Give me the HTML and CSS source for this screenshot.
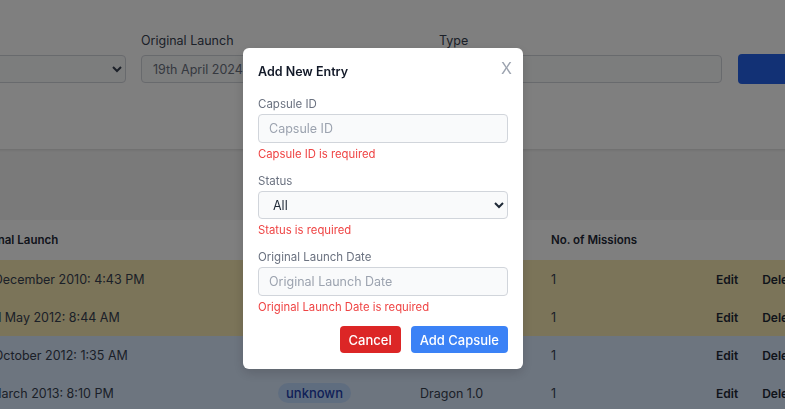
FILE: index.html
```html
<!DOCTYPE html>
<html lang="en">
<head>
<meta charset="utf-8">
<title>Capsules</title>
<link rel="stylesheet" href="styles.css">
</head>
<body>
<div class="page">
  <section class="filters">
    <div class="field">
      <label class="flabel">Status</label>
      <select class="fselect"><option>All</option></select>
    </div>
    <div class="field">
      <label class="flabel">Original Launch</label>
      <input class="finput" type="text" placeholder="19th April 2024">
    </div>
    <div class="field">
      <label class="flabel">Type</label>
      <input class="finput" type="text">
    </div>
    <div class="field">
      <label class="flabel">&nbsp;</label>
      <button class="search">Search</button>
    </div>
  </section>

  <section class="table">
    <div class="row head">
      <div>Capsule Serial</div>
      <div>Original Launch</div>
      <div>Status</div>
      <div>Type</div>
      <div>No. of Missions</div>
      <div></div>
    </div>
    <div class="row yellow">
      <div>C101</div>
      <div>8th December 2010: 4:43 PM</div>
      <div><span class="badge">retired</span></div>
      <div>Dragon 1.0</div>
      <div>1</div>
      <div class="actions"><span>Edit</span><span>Delete</span></div>
    </div>
    <div class="row yellow">
      <div>C102</div>
      <div>22nd May 2012: 8:44 AM</div>
      <div><span class="badge">retired</span></div>
      <div>Dragon 1.0</div>
      <div>1</div>
      <div class="actions"><span>Edit</span><span>Delete</span></div>
    </div>
    <div class="row blue">
      <div>C103</div>
      <div>8th October 2012: 1:35 AM</div>
      <div><span class="badge">unknown</span></div>
      <div>Dragon 1.0</div>
      <div>1</div>
      <div class="actions"><span>Edit</span><span>Delete</span></div>
    </div>
    <div class="row blue">
      <div>C104</div>
      <div>1st March 2013: 8:10 PM</div>
      <div><span class="badge">unknown</span></div>
      <div>Dragon 1.0</div>
      <div>1</div>
      <div class="actions"><span>Edit</span><span>Delete</span></div>
    </div>
  </section>
</div>

<div class="overlay"></div>

<div class="modal">
  <h2 class="title">Add New Entry</h2>
  <button class="close">X</button>
  <div class="group">
    <label class="mlabel">Capsule ID</label>
    <input class="minput" type="text" placeholder="Capsule ID">
    <p class="error">Capsule ID is required</p>
  </div>
  <div class="group">
    <label class="mlabel">Status</label>
    <select class="mselect"><option>All</option></select>
    <p class="error">Status is required</p>
  </div>
  <div class="group">
    <label class="mlabel">Original Launch Date</label>
    <input class="minput" type="text" placeholder="Original Launch Date">
    <p class="error">Original Launch Date is required</p>
  </div>
  <div class="buttons">
    <button class="btn cancel">Cancel</button>
    <button class="btn add">Add Capsule</button>
  </div>
</div>
</body>
</html>
```

FILE: styles.css
```css
* { box-sizing: border-box; }

html, body {
  margin: 0;
  padding: 0;
  overflow: hidden;
}

body {
  background: #f5f5f5;
  font-family: Inter, "Liberation Sans", sans-serif;
  color: #1f2937;
  width: 785px;
  height: 409px;
}

.page {
  margin-left: -177px;
  width: 1200px;
}

/* filter panel */
.filters {
  background: #ffffff;
  height: 149px;
  box-shadow: 0 1px 3px rgba(0, 0, 0, 0.12);
  padding: 31px 20px 0;
  display: grid;
  grid-template-columns: 283px 283px 283px 160px;
  column-gap: 15px;
}

.field {
  display: flex;
  flex-direction: column;
}

.flabel {
  font-size: 12.5px;
  line-height: 20px;
  color: #374151;
  margin-bottom: 4px;
}

.finput, .fselect {
  height: 28px;
  border: 1px solid #d1d5db;
  border-radius: 4px;
  background: #f9fafb;
  font-family: inherit;
  font-size: 12.5px;
  padding: 0 15px 0 11px;
  color: #374151;
}

.finput::placeholder { color: #6b7280; }

.search {
  margin-left: 1px;
  margin-top: -1px;
  height: 30px;
  border: 0;
  border-radius: 4px;
  background: #2563eb;
  color: #ffffff;
  font-family: inherit;
  font-size: 13px;
}

/* table */
.table {
  margin-top: 71px;
  padding-left: 20px;
}

.row {
  display: grid;
  grid-template-columns: 128px 307px 142px 131px 165px 1fr;
  align-items: center;
  height: 38px;
  font-size: 12.5px;
  color: #374151;
}

.row.head {
  height: 40px;
  background: #ffffff;
  font-size: 11.5px;
  font-weight: 600;
  color: #1f2937;
}

.row.yellow { background: #f6e8b2; }
.row.blue { background: #dbeafe; }

.badge {
  display: inline-block;
  background: #bfdbfe;
  color: #1e40af;
  font-size: 13px;
  font-weight: 500;
  border-radius: 999px;
  padding: 2px 8px;
  line-height: 16px;
}

.actions {
  display: flex;
  gap: 24px;
  font-size: 12px;
  font-weight: 600;
  color: #1f2937;
}

/* overlay + modal */
.overlay {
  position: fixed;
  inset: 0;
  background: rgba(0, 0, 0, 0.5);
}

.modal {
  position: fixed;
  left: 243px;
  top: 48px;
  width: 280px;
  background: #ffffff;
  border-radius: 6px;
  padding: 16px 15px 16px;
  box-shadow: 0 4px 12px rgba(0, 0, 0, 0.15);
}

.title {
  margin: 0 0 16px;
  font-size: 12.5px;
  line-height: 16px;
  font-weight: 600;
  color: #111827;
}

.close {
  position: absolute;
  top: 10px;
  right: 9px;
  border: 0;
  background: none;
  padding: 0 2px;
  font-family: inherit;
  font-size: 16px;
  line-height: 20px;
  color: #9ca3af;
}

.group {
  display: flex;
  flex-direction: column;
  margin-bottom: 11px;
}

.mlabel {
  font-size: 11.5px;
  line-height: 16px;
  color: #6b7280;
  margin-bottom: 2px;
}

.minput, .mselect {
  height: 29px;
  border: 1px solid #d1d5db;
  border-radius: 4px;
  background: #f9fafb;
  font-family: inherit;
  font-size: 12.5px;
  color: #1f2937;
  padding: 0 10px;
}

.mselect { height: 28px; }

.minput::placeholder { color: #9ca3af; }

.error {
  margin: 3px 0 0;
  font-size: 11.3px;
  line-height: 16px;
  color: #ef4444;
}

.buttons {
  display: flex;
  justify-content: flex-end;
  gap: 10px;
  margin-top: 0;
}

.btn {
  height: 27px;
  border: 0;
  border-radius: 4px;
  padding: 0 9px;
  font-family: inherit;
  font-size: 13px;
  font-weight: 500;
  color: #ffffff;
}

.cancel { background: #dc2626; }
.add { background: #3b82f6; }
```
